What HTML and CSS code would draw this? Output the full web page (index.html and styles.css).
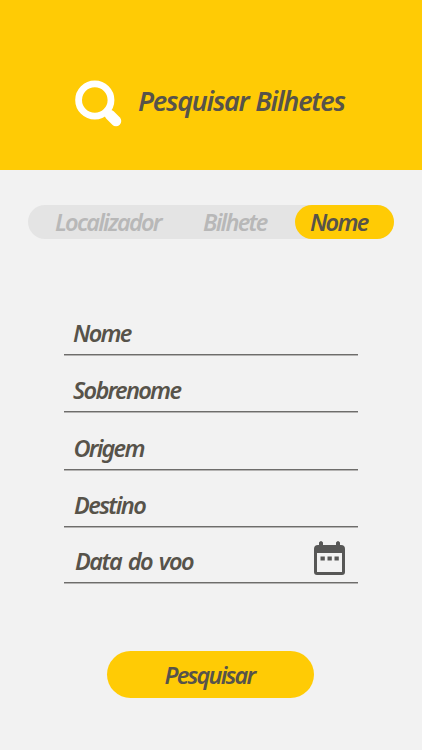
FILE: index.html
```html
<!DOCTYPE html>
<html lang="pt"><head><meta charset="utf-8"><title>Pesquisar Bilhetes</title><link rel="stylesheet" href="styles.css"></head>
<body>
<header class="header">
<svg class="search" viewBox="0 0 48 48"><circle cx="19.8" cy="20" r="16.2" fill="none" stroke="#fff" stroke-width="6.8"/><path d="M31 31l5 5" stroke="#fff" stroke-width="7"/><path d="M35 35l6 6" stroke="#fff" stroke-width="10.5" stroke-linecap="round"/></svg>
<h1 class="title">Pesquisar Bilhetes</h1>
</header>
<main>
<nav class="tabs"><a class="tab tab-locator"><span>Localizador</span></a><a class="tab tab-ticket"><span>Bilhete</span></a><a class="tab active"><span>Nome</span></a></nav>
<form class="form">
<label class="field name"><span>Nome</span></label>
<label class="field surname"><span>Sobrenome</span></label>
<label class="field origin"><span>Origem</span></label>
<label class="field destination"><span>Destino</span></label>
<label class="field date"><span>Data do voo</span>
<svg class="calendar" viewBox="0 0 34 36"><path fill="#575756" fill-rule="evenodd" d="M6 2.5q2-3 4 0V5h13V2.5q2-3 4 0V5h1q4 0 4 4v23q0 3-3 3H4q-3 0-3-3V9q0-4 4-4h1zM4 13v19h25V13z"/><path fill="#575756" d="M7.5 16.5h4.3v4H7.5zm7 0h4.3v4h-4.3zm7 0h4.3v4h-4.3z"/></svg></label>
<button class="submit" type="button"><span>Pesquisar</span></button>
</form>
</main>
</body></html>
```
FILE: styles.css
```css
* { box-sizing: border-box; }
body { margin: 0; height: 750px; background: #f2f2f2; color: #57534a; font-family: "Noto Sans", sans-serif; font-style: italic; font-weight: 600; overflow: hidden; }
.header { height: 169.5px; background: #ffcb05; display: flex; align-items: flex-start; padding: 80px 0 0 75px; }
.search { width: 48px; height: 48px; flex: none; }
.title { margin: 4px 0 0 15px; font-size: 27px; line-height: 34px; letter-spacing: -1.25px; word-spacing: 1px; font-weight: 600; white-space: nowrap; }
.tabs { display: flex; margin: 35.5px 28px 0; height: 34px; border-radius: 17px; background: #e4e4e4; color: #b8b8b8; font-size: 23.5px; line-height: 34px; letter-spacing: -1.75px; }
.tab { white-space: nowrap; }
.tab-locator { width: 175px; padding-left: 27px; }
.tab-ticket { width: 92px; }
.active { width: 99px; padding-left: 15px; border-radius: 17px; background: #ffcb05; color: #57534a; }
.form { width: 294px; margin: 58.5px 0 0 64px; }
.field { display: flex; justify-content: space-between; align-items: flex-end; height: 57.4px; padding: 0 11px 6px 9px; border-bottom: 1px solid #6e6d6b; box-shadow: 0 1px #b5b4b3; font-size: 23.5px; line-height: 30px; letter-spacing: -1.7px; }
.destination { padding-left: 10px; letter-spacing: -1.6px; }
.origin { padding-left: 9.5px; letter-spacing: -1.8px; }
.date { height: 56.4px; padding-left: 11px; letter-spacing: -1.5px; word-spacing: 2px; }
.calendar { width: 34px; height: 36px; }
.submit { display: block; width: 207px; height: 46.5px; margin: 68px 0 0 43px; padding: 1px 2px 0 0; border: 0; border-radius: 24px; background: #ffcb05; color: inherit; font: inherit; font-size: 23.5px; letter-spacing: -1.8px; }
```
